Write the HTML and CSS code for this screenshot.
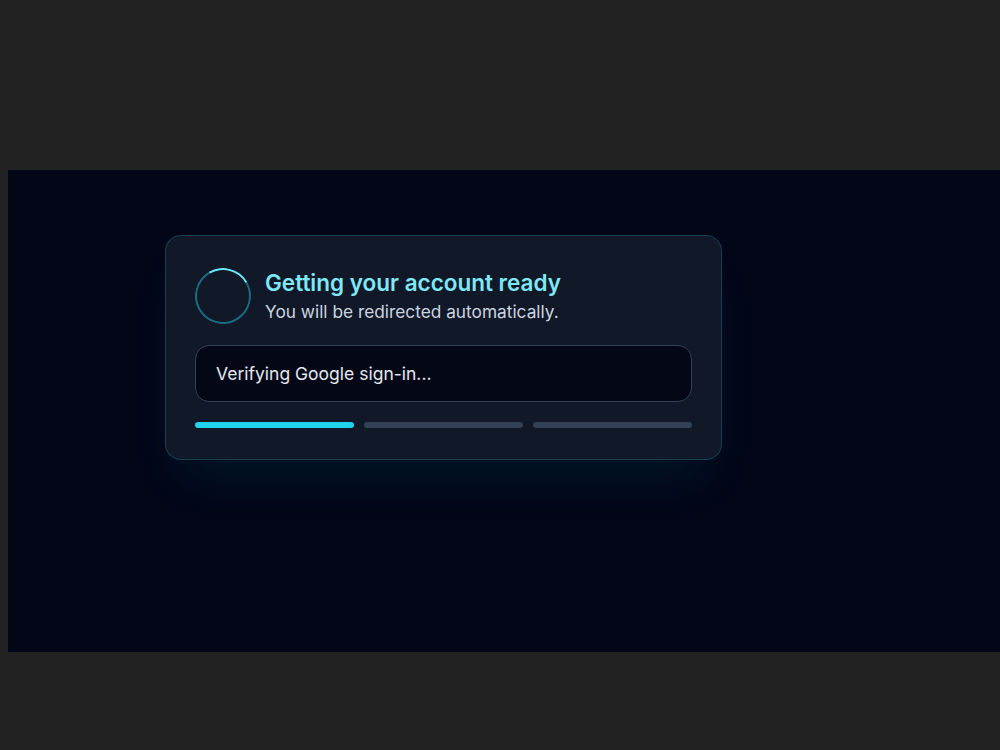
FILE: index.html
```html
<!DOCTYPE html>
<html lang="en">
<head>
  <meta charset="UTF-8" />
  <meta name="viewport" content="width=device-width, initial-scale=1.0" />
  <title>Signing in…</title>
  <link rel="stylesheet" href="styles.css">
</head>
<body>
  <main class="screen">
    <section class="card">
      <div class="card-head">
        <div class="spinner"></div>
        <div class="head-text">
          <h1 class="title">Getting your account ready</h1>
          <p class="subtitle">You will be redirected automatically.</p>
        </div>
      </div>

      <div class="status">Verifying Google sign-in...</div>

      <div class="steps">
        <span class="step done"></span>
        <span class="step"></span>
        <span class="step"></span>
      </div>
    </section>
  </main>
</body>
</html>
```

FILE: styles.css
```css
html, body {
  margin: 0;
  height: 100%;
}
body {
  font-family: Inter, 'Noto Sans', sans-serif;
  background: #222222;
  padding: 170px 0 0 8px;
  box-sizing: border-box;
  overflow: hidden;
}
.screen {
  height: 482px;
  background: #020617;
  padding: 65px 0 0 157px;
  box-sizing: border-box;
}
.card {
  width: 557px;
  box-sizing: border-box;
  padding: 31px 29px 31px;
  background: #111827;
  border: 1px solid rgba(34, 211, 238, 0.22);
  border-radius: 16px;
  box-shadow: 0 30px 50px -14px rgba(8, 145, 178, 0.12);
}
.card-head {
  display: flex;
  align-items: center;
  gap: 14px;
}
.head-text {
  padding-top: 2px;
}
.spinner {
  width: 56px;
  height: 56px;
  box-sizing: border-box;
  flex-shrink: 0;
  border-radius: 50%;
  border: 2.5px solid rgba(34, 211, 238, 0.45);
  border-top-color: #67e8f9;
  transform: rotate(15deg);
}
.title {
  margin: 0;
  font-size: 22.5px;
  font-weight: 600;
  color: #7ee8f8;
  line-height: 28px;
}
.subtitle {
  margin: 3px 0 0;
  font-size: 17.3px;
  color: #cbd5e1;
  line-height: 24px;
}
.status {
  margin-top: 21px;
  height: 57px;
  box-sizing: border-box;
  padding: 0 20px;
  display: flex;
  align-items: center;
  background: #040816;
  border: 1px solid #334155;
  border-radius: 14px;
  color: #e2e8f0;
  font-size: 17.5px;
}
.steps {
  display: flex;
  gap: 10px;
  margin-top: 20px;
}
.step {
  flex: 1;
  height: 6px;
  border-radius: 3px;
  background: #334155;
}
.step.done {
  background: #22d3ee;
}
```
